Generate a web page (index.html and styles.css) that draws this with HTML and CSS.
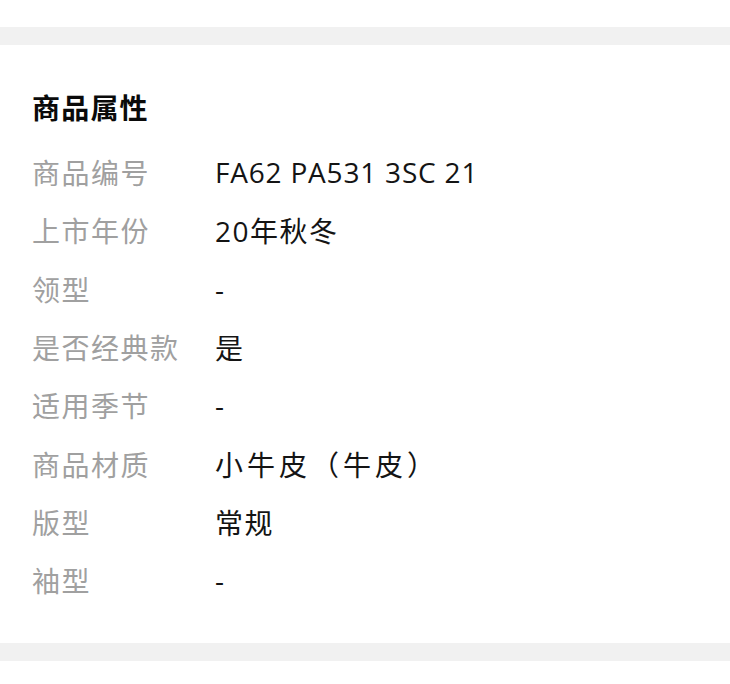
FILE: index.html
```html
<!DOCTYPE html>
<html lang="zh-CN">
<head>
<meta charset="utf-8">
<link rel="stylesheet" href="styles.css">
</head>
<body>
<div class="gap-top"></div>
<div class="band"></div>
<section class="attrs">
  <h2 class="title">商品属性</h2>
  <dl class="list">
    <div class="row"><dt>商品编号</dt><dd class="latin">FA62 PA531 3SC 21</dd></div>
    <div class="row"><dt>上市年份</dt><dd>20年秋冬</dd></div>
    <div class="row"><dt>领型</dt><dd>-</dd></div>
    <div class="row"><dt>是否经典款</dt><dd>是</dd></div>
    <div class="row"><dt>适用季节</dt><dd>-</dd></div>
    <div class="row"><dt>商品材质</dt><dd class="wide">小牛皮（牛皮）</dd></div>
    <div class="row"><dt>版型</dt><dd>常规</dd></div>
    <div class="row"><dt>袖型</dt><dd>-</dd></div>
  </dl>
</section>
<div class="band"></div>
</body>
</html>
```
FILE: styles.css
```css
html, body {
  margin: 0;
  padding: 0;
  background: #ffffff;
}
body {
  font-family: "Open Sans", "Noto Sans CJK SC", sans-serif;
  width: 730px;
}
.gap-top {
  height: 27px;
}
.band {
  height: 18px;
  background: #f1f1f1;
}
.attrs {
  padding: 33px 0 34px 32px;
}
.title {
  margin: 0 0 7px 0;
  font-size: 28px;
  line-height: 58px;
  font-weight: 700;
  color: #0a0a0a;
  letter-spacing: 1.2px;
  font-family: "Noto Sans CJK SC", sans-serif;
}
.list {
  margin: 0;
}
.row {
  display: flex;
  height: 58.3px;
  align-items: center;
}
.row dt {
  width: 183px;
  flex: none;
  font-size: 28px;
  color: #a0a0a0;
  letter-spacing: 1.5px;
  font-family: "Noto Sans CJK SC", sans-serif;
}
.row dd {
  margin: 0;
  font-size: 28px;
  color: #141414;
  letter-spacing: 1.5px;
  font-family: "Open Sans", "Noto Sans CJK SC", sans-serif;
}
.row dd.latin {
  letter-spacing: 0.8px;
}
.row dd.wide {
  letter-spacing: 4px;
}
```
